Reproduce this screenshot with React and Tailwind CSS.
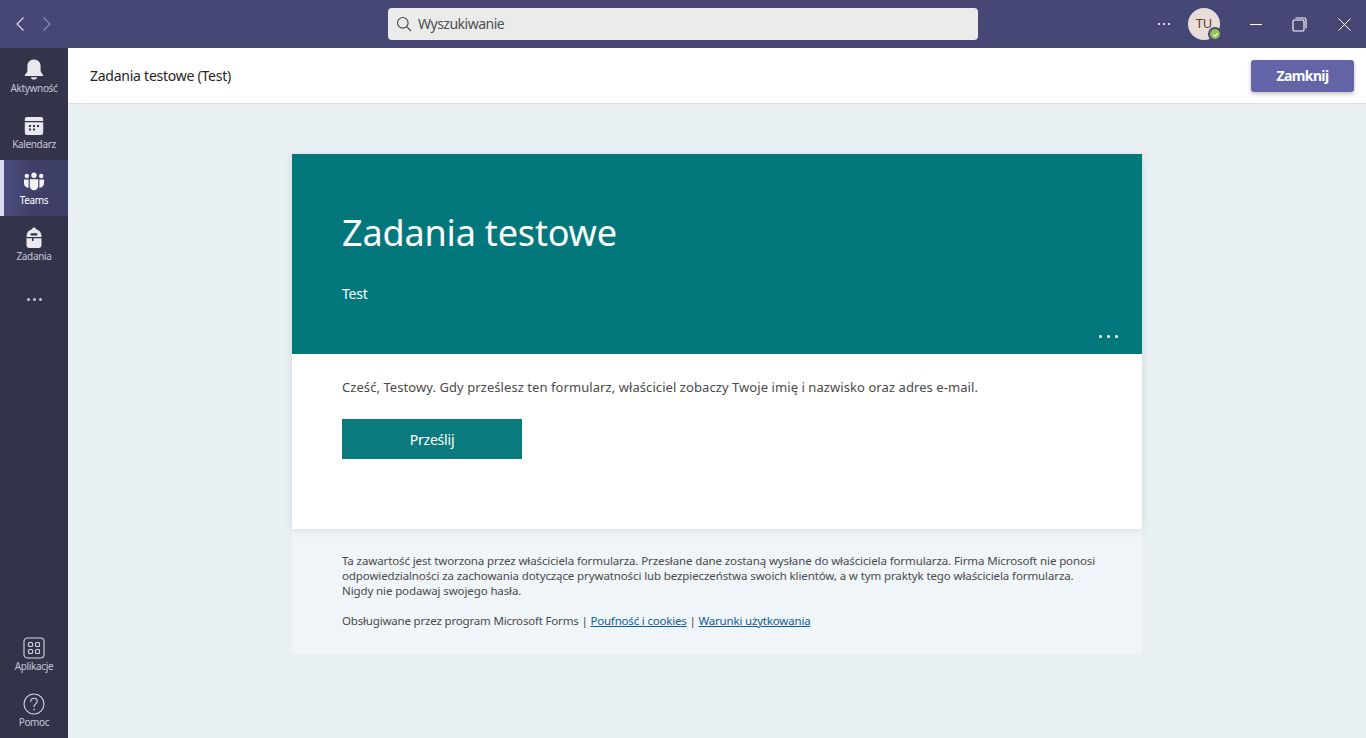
import React from "react";

const font = { fontFamily: '"Noto Sans", "Open Sans", sans-serif' };

function RailItem({ label, active, children, labelClass = "text-[#c5c6d6]" }) {
  return (
    <div className={`relative flex h-14 w-[68px] flex-col items-center pt-[11px] ${active ? "bg-gradient-to-r from-[#4c4d80] via-[#3f4068] to-[#3d3e66]" : ""}`}>
      {active && <div className="absolute left-0 top-0 h-14 w-[4px] bg-[#dcdcf5]" />}
      <div className="flex h-[22px] items-center justify-center">{children}</div>
      <div className={`text-[10px] leading-[14px] tracking-[-0.35px] ${labelClass}`}>{label}</div>
    </div>
  );
}

const Bell = () => (
  <svg width="20" height="22" viewBox="0 0 20 22" fill="#e8e8ee">
    <path d="M10 0.5c-4.2 0-6.6 3-6.6 6.6v4.4c0 1.7-1.2 3-2.4 4.2-.5.6-.2 1.3.6 1.3h16.800c.8 0 1.100-.7.6-1.300-1.200-1.200-2.400-2.500-2.400-4.200V7.100C16.600 3.500 14.200.5 10 .5z" />
    <path d="M6.800 18.300h6.400c-.4 1.500-1.700 2.300-3.200 2.300s-2.800-.8-3.200-2.300z" />
  </svg>
);
const Calendar = () => (
  <svg width="20" height="20" viewBox="0 0 20 20" fill="#e8e8ee">
    <path d="M3 1h14a2.200 2.200 0 0 1 2.200 2.200V5H.8V3.200A2.200 2.200 0 0 1 3 1z" />
    <path d="M.8 6.300h18.400v10.500A2.200 2.200 0 0 1 17 19H3a2.200 2.200 0 0 1-2.200-2.200z" />
    <g fill="#33344a">
      <rect x="5" y="9" width="2" height="2" /><rect x="9" y="9" width="2" height="2" /><rect x="13" y="9" width="2" height="2" />
      <rect x="5" y="12.500" width="2" height="2" /><rect x="9" y="12.500" width="2" height="2" />
    </g>
  </svg>
);
const TeamsIcon = () => (
  <svg width="22" height="20" viewBox="0 0 22 20" fill="#f2f2f8">
    <circle cx="11" cy="3.200" r="2.700" /><circle cx="3.800" cy="4" r="2.200" /><circle cx="18.200" cy="4" r="2.200" />
    <path d="M6.800 7.200h8.400v6.800a4.200 4.200 0 0 1-8.400 0z" />
    <path d="M1 7.400h4.600V14c0 .7.100 1.300.3 1.800C3 15.800 1 14 1 11.500z" />
    <path d="M21 7.400h-4.600V14c0 .7-.1 1.300-.3 1.800 2.900 0 4.900-1.800 4.900-4.300z" />
  </svg>
);
const Backpack = () => (
  <svg width="18" height="22" viewBox="0 0 18 22" fill="#e8e8ee">
    <path d="M9 .5c1 0 1.800.7 2 1.700 3.400.9 5.500 3.500 5.500 7V10h-15v-.8c0-3.500 2.100-6.100 5.500-7 .2-1 1-1.700 2-1.700z" />
    <path d="M1.500 11.300H7V14h1.500v-2.700h8V18a3 3 0 0 1-3 3h-9a3 3 0 0 1-3-3z" />
    <rect x="5.500" y="6.300" width="7" height="2.200" rx="1.100" fill="#33344a" />
  </svg>
);
const Apps = () => (
  <svg width="22" height="22" viewBox="0 0 22 22" fill="none" stroke="#d8d8e2" strokeWidth="1.100">
    <rect x="1" y="1" width="20" height="20" rx="3.500" />
    <rect x="5.500" y="5.500" width="4" height="4" rx="1" /><rect x="12.500" y="5.500" width="4" height="4" rx="1" />
    <rect x="5.500" y="12.500" width="4" height="4" rx="1" /><rect x="12.500" y="12.500" width="4" height="4" rx="1" />
  </svg>
);
const Help = () => (
  <svg width="22" height="22" viewBox="0 0 22 22" fill="none" stroke="#d8d8e2" strokeWidth="1.100">
    <circle cx="11" cy="11" r="10" />
    <path d="M7.800 8.500c0-1.900 1.400-3.200 3.200-3.200s3.200 1.200 3.200 2.900c0 2.600-3.200 2.700-3.200 5.400" strokeLinecap="round" />
    <circle cx="11" cy="16.500" r=".8" fill="#d8d8e2" stroke="none" />
  </svg>
);

export default function App() {
  return (
    <div className="flex h-[738px] w-[1366px] flex-col overflow-hidden bg-[#e8f0f3]" style={font}>
      <header className="relative flex h-12 shrink-0 items-center justify-between bg-[#464775]">
        <div className="flex items-center gap-[17px] pl-[15px]">
          <svg width="10" height="16" viewBox="0 0 10 16" fill="none" stroke="#e4e4ef" strokeWidth="1.100"><path d="M8.500 1.500 2 8l6.500 6.500" /></svg>
          <svg width="10" height="16" viewBox="0 0 10 16" fill="none" stroke="#8f90b3" strokeWidth="1.100"><path d="M1.500 1.500 8 8l-6.500 6.500" /></svg>
        </div>
        <div className="absolute left-[388px] top-2 flex h-8 w-[590px] items-center rounded-[4px] bg-[#ebebeb] pl-[8px]">
          <svg width="16" height="16" viewBox="0 0 16 16" fill="none" stroke="#444" strokeWidth="1.100">
            <circle cx="6.800" cy="6.800" r="5.300" /><path d="m10.700 10.700 4.300 4.300" />
          </svg>
          <span className="ml-[6px] text-[14px] leading-5 tracking-[-0.5px] text-[#4f4f4f]">Wyszukiwanie</span>
        </div>
        <div className="flex items-center">
          <div className="mr-[18px] flex gap-[3px]">
            <i className="h-[2px] w-[2px] rounded-full bg-white" /><i className="h-[2px] w-[2px] rounded-full bg-white" /><i className="h-[2px] w-[2px] rounded-full bg-white" />
          </div>
          <div className="relative mr-[30px] flex h-8 w-8 items-center justify-center rounded-full bg-[#e8ddd8] text-[13px] tracking-[-0.2px] text-[#5c3a2c]">
            TU
            <div className="absolute left-[20px] top-[19px] flex h-[14px] w-[14px] items-center justify-center rounded-full border-2 border-[#464775] bg-[#92c353]">
              <svg width="7" height="7" viewBox="0 0 8 8" fill="none" stroke="white" strokeWidth="1.300"><path d="m1.500 4 2 2 3-3.500" /></svg>
            </div>
          </div>
          <div className="mr-[30px] h-px w-[12px] bg-white" />
          <svg className="mr-[31px]" width="15" height="15" viewBox="0 0 15 15" fill="none" stroke="white" strokeWidth="1.100">
            <rect x="1" y="3" width="11" height="11" rx="1.300" /><path d="M3.500 1h8.700A1.800 1.800 0 0 1 14 2.800v8.400" />
          </svg>
          <svg className="mr-[15px]" width="13" height="13" viewBox="0 0 13 13" fill="none" stroke="white" strokeWidth="1"><path d="m.5.500 12 12M12.500.500l-12 12" /></svg>
        </div>
      </header>

      <div className="flex min-h-0 flex-1">
        <nav className="flex w-[68px] shrink-0 flex-col bg-[#33344a]">
          <RailItem label="Aktywność"><Bell /></RailItem>
          <RailItem label="Kalendarz"><Calendar /></RailItem>
          <RailItem label="Teams" active labelClass="text-white"><TeamsIcon /></RailItem>
          <RailItem label="Zadania"><Backpack /></RailItem>
          <div className="flex h-[56px] justify-center gap-[3px] pt-[26px]">
            <i className="h-[3px] w-[3px] rounded-full bg-[#c5c6d6]" /><i className="h-[3px] w-[3px] rounded-full bg-[#c5c6d6]" /><i className="h-[3px] w-[3px] rounded-full bg-[#c5c6d6]" />
          </div>
          <div className="mt-auto">
            <RailItem label="Aplikacje"><Apps /></RailItem>
            <RailItem label="Pomoc"><Help /></RailItem>
          </div>
        </nav>

        <main className="flex min-w-0 flex-1 flex-col">
          <div className="flex h-[56px] shrink-0 items-center justify-between border-b border-[#dcdfe1] bg-white pl-[22px] pr-[12px]">
            <div className="text-[14px] tracking-[-0.25px] text-[#252423]">Zadania testowe (Test)</div>
            <button className="h-8 w-[103px] rounded-[3px] bg-[#6264a7] text-[14px] font-bold tracking-[-0.6px] text-white shadow-[0_2px_4px_rgba(0,0,0,0.25)]">Zamknij</button>
          </div>

          <div className="flex flex-1 flex-col items-center pt-[50px]">
            <section className="relative z-10 w-[850px] shadow-[0_2px_8px_rgba(0,0,0,0.1)]">
              <div className="relative h-[200px] bg-[#03787c] pl-[50px] pt-[52px] text-white">
                <h1 className="text-[36px] leading-[54px] tracking-[-0.17px]">Zadania testowe</h1>
                <p className="mt-[24px] text-[14px] leading-5 tracking-[-0.2px]">Test</p>
                <div className="absolute right-[24px] top-[181px] flex gap-[5px]">
                  <i className="h-[3px] w-[3px] rounded-full bg-white" /><i className="h-[3px] w-[3px] rounded-full bg-white" /><i className="h-[3px] w-[3px] rounded-full bg-white" />
                </div>
              </div>
              <div className="h-[175px] bg-white pl-[50px] pt-[23px]">
                <p className="text-[13px] leading-5 tracking-[0.07px] text-[#4a4a4a]">Cześć, Testowy. Gdy prześlesz ten formularz, właściciel zobaczy Twoje imię i nazwisko oraz adres e-mail.</p>
                <button className="mt-[22px] h-10 w-[180px] bg-[#0b7a7e] text-[14px] tracking-[-0.2px] text-white">Prześlij</button>
              </div>
            </section>
            <footer className="h-[125px] w-[850px] whitespace-nowrap bg-[#eff5f8] px-[50px] pt-[24px] text-[11.500px] leading-[15px] tracking-[-0.11px] text-[#4a4a4a]">
              <p>Ta zawartość jest tworzona przez właściciela formularza. Przesłane dane zostaną wysłane do właściciela formularza. Firma Microsoft nie ponosi<br />odpowiedzialności za zachowania dotyczące prywatności lub bezpieczeństwa swoich klientów, a w tym praktyk tego właściciela formularza.<br />Nigdy nie podawaj swojego hasła.</p>
              <p className="mt-[15px] tracking-[-0.18px]">Obsługiwane przez program Microsoft Forms | <a className="text-[#0f5c9c] underline">Poufność i cookies</a> | <a className="text-[#0f5c9c] underline">Warunki użytkowania</a></p>
            </footer>
          </div>
        </main>
      </div>
    </div>
  );
}
